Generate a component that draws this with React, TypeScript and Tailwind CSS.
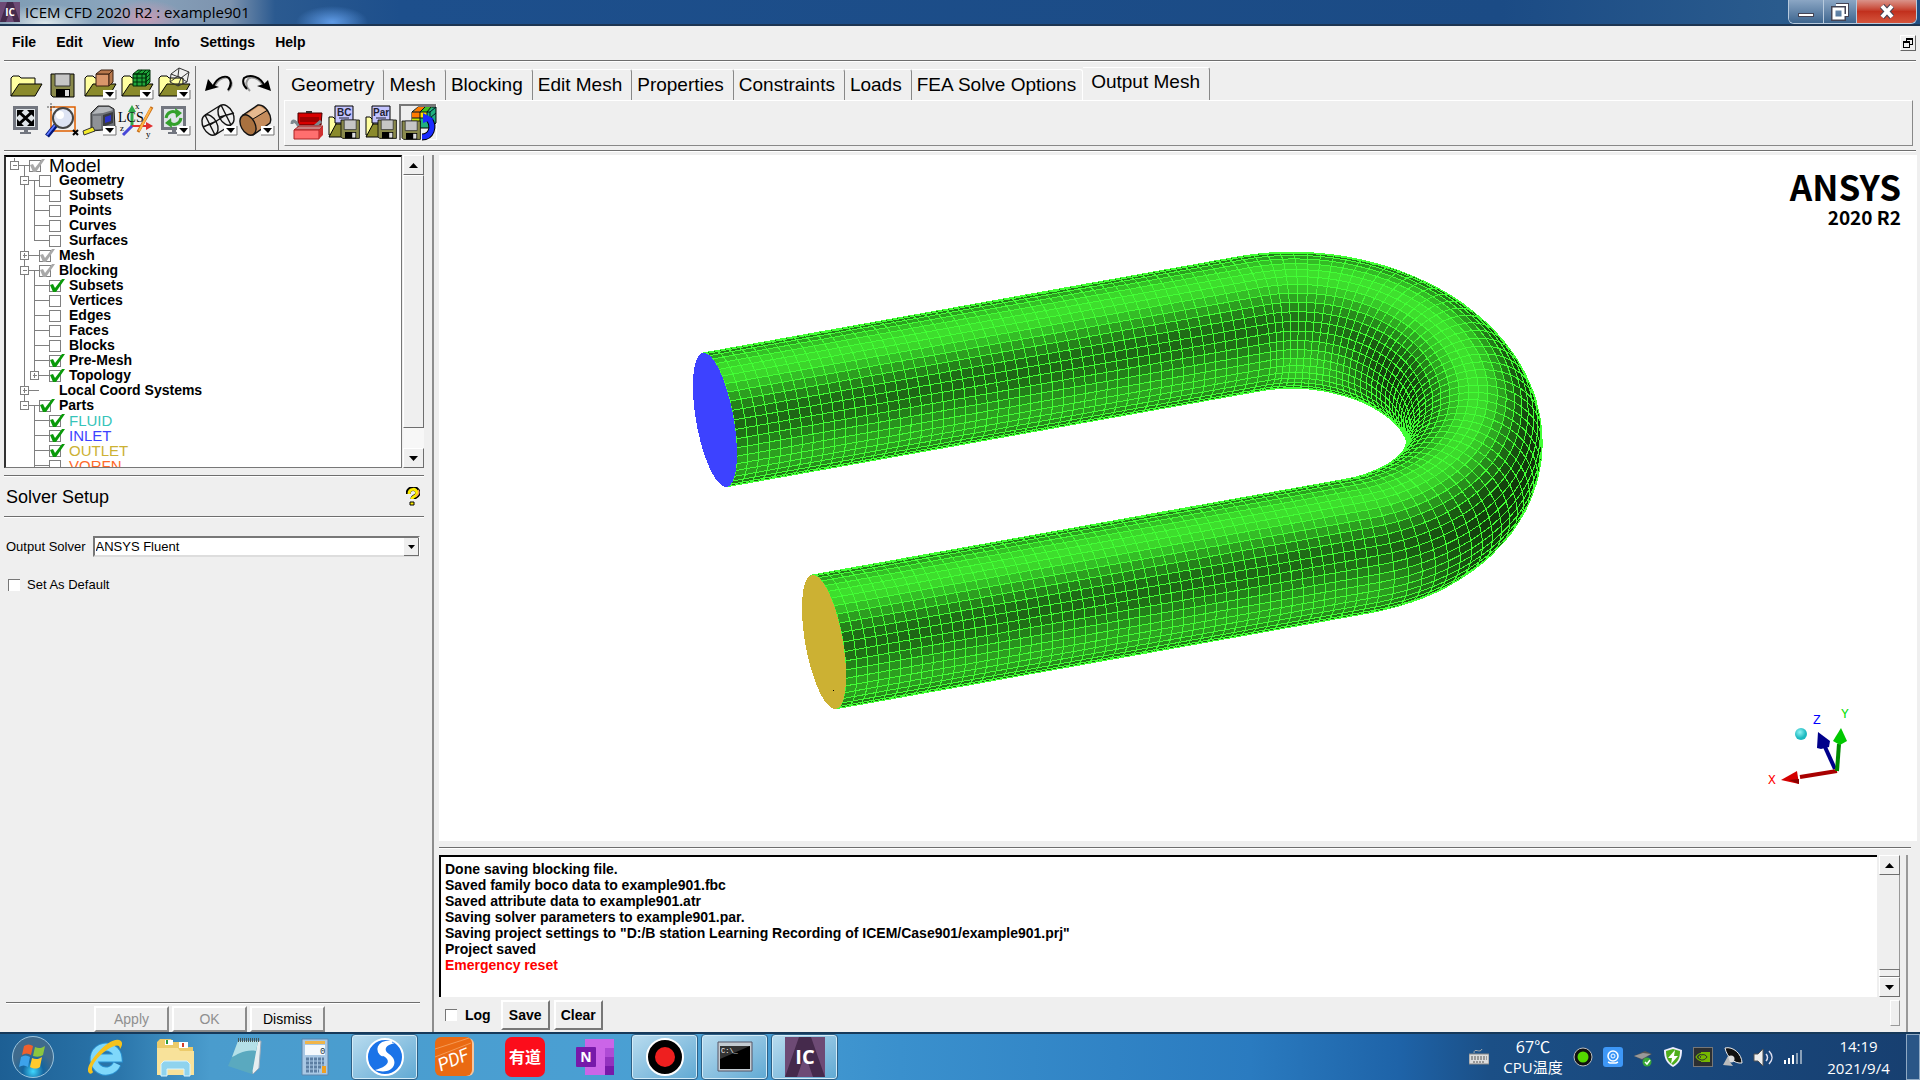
import React from 'react';
import clsx from 'clsx';

type Vec = [number, number, number];

/* ---------- pipe mesh ---------- */

const AXIS: Vec = [0.946, -0.17, -0.275];
const ACROSS: Vec = [0.318, 0.647, 0.694];
const BINORMAL: Vec = [
  AXIS[1] * ACROSS[2] - AXIS[2] * ACROSS[1],
  AXIS[2] * ACROSS[0] - AXIS[0] * ACROSS[2],
  AXIS[0] * ACROSS[1] - AXIS[1] * ACROSS[0],
];
const CENTER: Vec = [1303, 435, 0];
const BEND = 171.6;
const TUBE = 68;
const LEG = 564;
const AROUND = 44;
const LEG_STEPS = 49;
const BEND_STEPS = 48;

const mix = (a: number, u: Vec, b: number, v: Vec): Vec => [
  a * u[0] + b * v[0],
  a * u[1] + b * v[1],
  a * u[2] + b * v[2],
];

const rings: { at: Vec; out: Vec }[] = [];
for (let i = 0; i < LEG_STEPS; i++) {
  const s = LEG * (1 - i / LEG_STEPS);
  rings.push({ at: mix(-BEND, ACROSS, -s, AXIS), out: mix(-1, ACROSS, 0, AXIS) });
}
for (let i = 0; i <= BEND_STEPS; i++) {
  const t = (Math.PI * i) / BEND_STEPS;
  const out = mix(-Math.cos(t), ACROSS, Math.sin(t), AXIS);
  rings.push({ at: mix(BEND, out, 0, out), out });
}
for (let i = 1; i <= LEG_STEPS; i++) {
  const s = (LEG * i) / LEG_STEPS;
  rings.push({ at: mix(BEND, ACROSS, -s, AXIS), out: mix(1, ACROSS, 0, AXIS) });
}

const normalAt = (ring: number, phi: number) => mix(Math.cos(phi), rings[ring].out, Math.sin(phi), BINORMAL);
const pointAt = (ring: number, phi: number): Vec => {
  const p = mix(1, rings[ring].at, TUBE, normalAt(ring, phi));
  return [p[0] + CENTER[0], p[1] + CENTER[1], p[2]];
};
const toPoints = (pts: Vec[]) => pts.map((p) => `${p[0].toFixed(1)},${p[1].toFixed(1)}`).join(' ');

const shade = (n: Vec) => {
  const top = Math.max(0, -0.68 * n[1] + 0.73 * n[2]);
  const bottom = Math.max(0, 0.7 * n[1] + 0.71 * n[2]);
  const v = Math.min(1, 0.22 + 0.74 * top ** 5 + 0.62 * bottom ** 5);
  return `rgb(${Math.round(64 * v + 2)},${Math.round(236 * v)},${Math.round(48 * v)})`;
};

const facets: { points: string; fill: string; depth: number }[] = [];
for (let i = 0; i < rings.length - 1; i++) {
  for (let j = 0; j < AROUND; j++) {
    const a = (2 * Math.PI * j) / AROUND;
    const b = (2 * Math.PI * (j + 1)) / AROUND;
    const n = mix(0.5, normalAt(i, (a + b) / 2), 0.5, normalAt(i + 1, (a + b) / 2));
    if (n[2] <= -0.02) continue;
    const quad = [pointAt(i, a), pointAt(i + 1, a), pointAt(i + 1, b), pointAt(i, b)];
    facets.push({ points: toPoints(quad), fill: shade(n), depth: quad[0][2] + quad[2][2] });
  }
}
facets.sort((p, q) => p.depth - q.depth);

const capPoints = (ring: number) =>
  toPoints(Array.from({ length: 60 }, (_, k) => pointAt(ring, (2 * Math.PI * k) / 60)));

const PipeView = () => (
  <svg viewBox="439 155 1478 686" className="block h-full w-full" role="img" aria-label="Pipe mesh">
    <g stroke="#42ff35" strokeWidth="1" shapeRendering="crispEdges">
      {facets.map((f, i) => (
        <polygon key={i} points={f.points} fill={f.fill} />
      ))}
    </g>
    <polygon points={capPoints(0)} fill="#3d42ff" shapeRendering="crispEdges" />
    <polygon points={capPoints(rings.length - 1)} fill="#ccb133" shapeRendering="crispEdges" />
    <rect x="833" y="690" width="1" height="1" />
    {/* axes */}
    <path d="M1835 769 1825 747" stroke="#00008b" strokeWidth="4" />
    <path d="M1818 732 1830 741 1829 747 1821 749 1817 748Z" fill="#00008b" />
    <path d="M1837 771 1800 777" stroke="#a80000" strokeWidth="4" />
    <path d="M1781 780 1797 771 1799 784Z" fill="#d40000" />
    <path d="M1789 780 1799 779 1799 784Z" fill="#8a0000" />
    <path d="M1837 771 1839 744" stroke="#008a00" strokeWidth="4" />
    <path d="M1841 728 1847 741 1840 745 1833 741Z" fill="#00c800" />
    <defs>
      <radialGradient id="ball" cx="40%" cy="35%">
        <stop offset="0" stopColor="#8ff4f4" />
        <stop offset="1" stopColor="#1cb9c0" />
      </radialGradient>
    </defs>
    <circle cx="1801" cy="734" r="6" fill="url(#ball)" />
    <g fontFamily="Liberation Mono, monospace" fontSize="13">
      <text x="1768" y="784" fill="#ff0000">X</text>
      <text x="1841" y="718" fill="#00e000">Y</text>
      <text x="1813" y="724" fill="#0000ff">Z</text>
    </g>
  </svg>
);

/* ---------- toolbar icons, 37 x 36 each ---------- */

const Drop = () => (
  <g>
    <path d="M22 22h12v9H22z" fill="#fff" />
    <path d="M22 31h13v-9" fill="none" stroke="#777" />
    <path d="M24 24h9l-4 5z" fill="#000" />
  </g>
);

const Folder = () => (
  <g stroke="#000" strokeWidth="1">
    <path d="M4 28V10l2-2h6l2 2h14v6" fill="#ffffa0" />
    <path d="M4 28 12 16h23l-7 12z" fill="#8a8a2c" />
  </g>
);

const Floppy = ({ x = 7, y = 6, s = 1 }: { x?: number; y?: number; s?: number }) => (
  <g transform={`translate(${x} ${y}) scale(${s})`}>
    <path d="M0 0h23v23H2l-2-2z" fill="#8a8a4c" stroke="#000" />
    <path d="M4 0h15v12H4z" fill="#c6c6c6" stroke="#333" />
    <path d="M5 15h14v8H5z" fill="#000" />
    <path d="M14 16h4v6h-4z" fill="#ddd" />
  </g>
);

const Monitor = ({ children }: { children: React.ReactNode }) => (
  <g>
    <path d="M6 2h25v24H6z" fill="#72767f" />
    <path d="M9 5h19v18H9z" fill="#dfe4e8" />
    <path d="M13 28h11v2H13zM17 26h4v3h-4z" fill="#72767f" />
    {children}
  </g>
);

const icons: Record<string, React.ReactNode> = {
  open: <Folder />,
  save: <Floppy />,
  geometry: (
    <>
      <Folder />
      <path d="M15 6v12h13V6z" fill="#d9966a" stroke="#3a2010" />
      <path d="M15 6l5-4h12l-4 4zM28 18l4-4V2l-4 4z" fill="#b8784c" stroke="#3a2010" />
      <Drop />
    </>
  ),
  mesh: (
    <>
      <Folder />
      <path d="M15 6v12h13V6zM15 6l5-4h12l-4 4zM28 18l4-4V2l-4 4z" fill="#1fa53a" stroke="#012d08" />
      <path d="M19 6v12M24 6v12M15 10h13l4-4M15 14h13l4-4M19 6l5-4M24 6l4-4" stroke="#012d08" fill="none" />
      <Drop />
    </>
  ),
  blocking: (
    <>
      <Folder />
      <path
        d="M16 6 24 0l10 4-2 10-9 4-8-4zM16 6l10 4 8-6M26 10l-3 8M24 0l-1 8-8 6M23 8l9 6"
        fill="none"
        stroke="#333"
      />
      <Drop />
    </>
  ),
  undo: (
    <>
      <path d="M12 20C16 9 27 7 29 13c2 4-1 8-3 10" fill="none" stroke="#999" strokeWidth="2" />
      <path d="M11 19C15 8 26 6 28 12c2 4 0 7-2 10" fill="none" stroke="#000" strokeWidth="2" />
      <path d="M3 23 6 11l5 6 6 2z" fill="#000" />
    </>
  ),
  redo: (
    <>
      <path d="M25 20C21 9 10 7 8 13c-2 4 1 8 3 10" fill="none" stroke="#999" strokeWidth="2" />
      <path d="M26 19C22 8 11 6 5 10c-2 4 0 8 3 11" fill="none" stroke="#000" strokeWidth="2" />
      <path d="M32 23 29 12l-4 4-7 2z" fill="#000" />
    </>
  ),
  fit: (
    <Monitor>
      <path d="M12 8l13 12M25 8 12 20" stroke="#000" strokeWidth="3" />
      <path d="M10 6h7l-7 7zM27 6h-7l7 7zM10 22h7l-7-7zM27 22h-7l7-7z" fill="#000" />
    </Monitor>
  ),
  zoom: (
    <>
      <path d="M7 3h24v24H7z" fill="none" stroke="#e06000" strokeWidth="1.5" />
      <path d="M3 3h8M7-1v8" stroke="#555" strokeDasharray="2 1" />
      <path d="M12 21 3 32" stroke="#00157a" strokeWidth="5" />
      <path d="M11 21 3 31" stroke="#5d78ff" strokeWidth="2" />
      <circle cx="19" cy="14" r="10" fill="#dde3f3" stroke="#444" strokeWidth="2" />
      <circle cx="16" cy="11" r="4" fill="#fff" />
      <path d="M29 26l5 5M34 26l-5 5" stroke="#000" strokeWidth="2" />
    </>
  ),
  measure: (
    <>
      <path d="M10 9 17 2h11l5 3 1 18-12 3-12 1z" fill="#6f7277" stroke="#222" />
      <path d="M11 10l7-7h10l4 3-10 3z" fill="#b4b7bb" />
      <path d="M12 12h8v13h-8z" fill="#8f9297" />
      <path d="M22 11l10-3v11l-10 4z" fill="#3a3c40" />
      <path d="M24 13l6-2v6l-6 2z" fill="#2b33c8" />
      <path d="M2 27l10-4 2 4-11 4z" fill="#f3ea2a" stroke="#333" />
      <Drop />
    </>
  ),
  lcs: (
    <>
      <path d="M14 22V4" stroke="#2fa84a" strokeWidth="3" />
      <path d="M10 8l4-7 4 7z" fill="#2fa84a" />
      <path d="M14 22h16" stroke="#e03030" strokeWidth="2" />
      <path d="M28 18l7 4-7 4z" fill="#e03030" />
      <path d="M14 22 5 31" stroke="#4848d8" strokeWidth="3" />
      <path d="M34 3 20 28" stroke="#c76a10" strokeWidth="3" />
      <path d="M33 4 21 27" stroke="#ffb347" strokeWidth="2" />
      <g fontFamily="Liberation Serif, serif" fill="#000">
        <text x="0" y="18" fontSize="14">LCS</text>
        <text x="17" y="5" fontSize="9">x</text>
        <text x="2" y="27" fontSize="9">z</text>
        <text x="28" y="33" fontSize="9">y</text>
      </g>
    </>
  ),
  refresh: (
    <>
      <Monitor>
        <path d="M11 14c1-6 7-8 11-5" fill="none" stroke="#33a02c" strokeWidth="3" />
        <path d="M20 4l7 5-6 5z" fill="#33a02c" />
        <path d="M26 14c-1 6-7 8-11 5" fill="none" stroke="#33a02c" strokeWidth="3" />
        <path d="M17 24l-7-5 6-5z" fill="#33a02c" />
      </Monitor>
      <Drop />
    </>
  ),
  wire: (
    <>
      <g fill="none" stroke="#111" strokeWidth="1.4">
        <ellipse cx="8" cy="21" rx="7" ry="11" transform="rotate(-28 8 21)" />
        <ellipse cx="24" cy="11" rx="7" ry="11" transform="rotate(-28 24 11)" />
        <path d="M3 11 19 1M13 31l16-10M3 11l10 20M1 23l14-6M19 1l10 20M18 13l14-4M8 21l16-10" />
      </g>
      <Drop />
    </>
  ),
  solid: (
    <>
      <path d="M4 11 19 1c7-1 15 11 12 18L14 31z" fill="#c58c5c" stroke="#111" strokeWidth="1.4" />
      <path d="M7 11 20 2l7 4-15 10z" fill="#e6b98f" />
      <path d="M14 15 29 6" stroke="#111" />
      <ellipse cx="9" cy="21" rx="7" ry="11" transform="rotate(-28 9 21)" fill="#a9713f" stroke="#111" strokeWidth="1.4" />
      <Drop />
    </>
  ),
  toolbox: (
    <>
      <path d="M9 9h24l-1 12H9z" fill="#d80000" stroke="#400" />
      <path d="M11 13h19v5H11z" fill="#a00000" />
      <path d="M17 8h6" stroke="#333" strokeWidth="2" />
      <path d="M3 20c0-6 5-2 7 3M24 24l8-7" fill="none" stroke="#7d898f" strokeWidth="3" />
      <path d="M5 26l5-4h24l-4 4z" fill="#c98080" stroke="#a22" />
      <path d="M5 26h25v9H5z" fill="#ff6f6f" stroke="#a22" />
      <path d="M30 26l4-4v9l-4 4z" fill="#d03030" />
    </>
  ),
  bc: (
    <>
      <path d="M3 31V13h4l3 3v15z" fill="#ffffa0" stroke="#000" />
      <path d="M3 33 10 20h12v13z" fill="#8a8a2c" stroke="#000" />
      <path d="M9 2h18v17H9z" fill="#c4c4ff" stroke="#000" />
      <text x="11" y="12" fontSize="10" fontFamily="Liberation Sans, sans-serif" fontWeight="bold" fill="#223">BC</text>
      <path d="M13 14h10" stroke="#223" />
      <Floppy x={15} y={16} s={0.8} />
    </>
  ),
  par: (
    <>
      <path d="M3 31V13h4l3 3v15z" fill="#ffffa0" stroke="#000" />
      <path d="M3 33 10 20h12v13z" fill="#8a8a2c" stroke="#000" />
      <path d="M9 2h18v17H9z" fill="#c4c4ff" stroke="#000" />
      <text x="10" y="12" fontSize="10" fontFamily="Liberation Sans, sans-serif" fontWeight="bold" fill="#223">Par</text>
      <path d="M13 14h10" stroke="#223" />
      <Floppy x={15} y={16} s={0.8} />
    </>
  ),
  write: (
    <>
      <path d="M0 36V1h36" fill="none" stroke="#777" strokeWidth="2" />
      <path d="M12 8l6-5h18v16l-6 5H12z" fill="#20b080" stroke="#000" />
      <path d="M12 8h8v6h-8zM18 3h7l-5 5h-7z" fill="#ff7a00" />
      <path d="M20 8h7v6h-7z" fill="#ffe000" />
      <path d="M25 3h7l-4 5h-8z" fill="#40c020" />
      <path d="M12 14h8v5h-8z" fill="#c8e000" />
      <path d="M12 8h18l6-5M30 8v16M12 14h18l6-5M20 8v12M27 8v8M25 3l-5 5M31 3l-4 5" fill="none" stroke="#012" />
      <path d="M22 33c9 0 13-10 7-18" fill="none" stroke="#000" strokeWidth="7" />
      <path d="M22 33c9 0 13-10 7-18" fill="none" stroke="#1b2cff" strokeWidth="5" />
      <path d="M23 19V9l11 6z" fill="#1b2cff" />
      <Floppy x={2} y={17} s={0.8} />
    </>
  ),
};

const ToolButton = ({ name, pressed }: { name: string; pressed?: boolean }) => (
  <button type="button" aria-label={name} className={clsx('block h-9 w-[37px]', pressed && 'border-r border-b border-white')}>
    <svg viewBox="0 0 37 36" className="block h-9 w-[37px] overflow-visible">{icons[name]}</svg>
  </button>
);

const toolGroups = [
  [
    ['open', 'save', 'geometry', 'mesh', 'blocking'],
    ['fit', 'zoom', 'measure', 'lcs', 'refresh'],
  ],
  [
    ['undo', 'redo'],
    ['wire', 'solid'],
  ],
];

const TABS = ['Geometry', 'Mesh', 'Blocking', 'Edit Mesh', 'Properties', 'Constraints', 'Loads', 'FEA Solve Options'];

/* ---------- model tree ---------- */

type Row = {
  label: string;
  level: number;
  // one letter for each guide column: f full, t upper half, b lower half, - none
  guides: string;
  expander?: '+' | '-';
  check?: 'off' | 'on' | 'partial';
  color?: string;
};

const ROWS: Row[] = [
  { label: 'Model', level: 0, guides: 'tb-', expander: '-', check: 'partial' },
  { label: 'Geometry', level: 1, guides: '-fb', expander: '-', check: 'off' },
  { label: 'Subsets', level: 2, guides: '-ff', check: 'off' },
  { label: 'Points', level: 2, guides: '-ff', check: 'off' },
  { label: 'Curves', level: 2, guides: '-ff', check: 'off' },
  { label: 'Surfaces', level: 2, guides: '-ft', check: 'off' },
  { label: 'Mesh', level: 1, guides: '-f-', expander: '+', check: 'partial' },
  { label: 'Blocking', level: 1, guides: '-fb', expander: '-', check: 'partial' },
  { label: 'Subsets', level: 2, guides: '-ff', check: 'on' },
  { label: 'Vertices', level: 2, guides: '-ff', check: 'off' },
  { label: 'Edges', level: 2, guides: '-ff', check: 'off' },
  { label: 'Faces', level: 2, guides: '-ff', check: 'off' },
  { label: 'Blocks', level: 2, guides: '-ff', check: 'off' },
  { label: 'Pre-Mesh', level: 2, guides: '-ff', check: 'on' },
  { label: 'Topology', level: 2, guides: '-ft', expander: '+', check: 'on' },
  { label: 'Local Coord Systems', level: 1, guides: '-f-', expander: '+' },
  { label: 'Parts', level: 1, guides: '-tb', expander: '-', check: 'on' },
  { label: 'FLUID', level: 2, guides: '--f', check: 'on', color: 'text-[#35c4b9]' },
  { label: 'INLET', level: 2, guides: '--f', check: 'on', color: 'text-[#3d42ff]' },
  { label: 'OUTLET', level: 2, guides: '--f', check: 'on', color: 'text-[#ccb133]' },
  { label: 'VORFN', level: 2, guides: '--f', check: 'off', color: 'text-[#ff6a2a]' },
];

const Guides = ({ row }: { row: Row }) => {
  const width = 23 + row.level * 10;
  const at = 8 + row.level * 10;
  return (
    <svg width={width} height="15" className="shrink-0 overflow-visible" fill="none" stroke="#808080" shapeRendering="crispEdges">
      {row.guides.split('').map((g, i) => {
        const x = 8.5 + i * 10;
        if (g === '-') return null;
        return <path key={i} d={`M${x} ${g === 'b' ? 7 : 0}V${g === 't' ? 8 : 15}`} />;
      })}
      <path d={`M${at} 7.5H${width}`} />
      {row.expander && (
        <g>
          <rect x={at - 3.5} y="3.5" width="8" height="8" fill="#fff" />
          <path d={`M${at - 1} 7.5h4`} />
          {row.expander === '+' && <path d={`M${at + 0.5} 5v5`} />}
        </g>
      )}
    </svg>
  );
};

const TreeRow = ({ row }: { row: Row }) => (
  <li className="flex h-[15px] items-center">
    <Guides row={row} />
    <label className="flex items-center gap-2">
      <span className="relative block size-3">
        {row.check && (
          <input
            type="checkbox"
            defaultChecked={row.check !== 'off'}
            className="block size-3 appearance-none border border-[#808080] bg-white"
          />
        )}
        {row.check && row.check !== 'off' && (
          <svg viewBox="0 0 16 14" className="pointer-events-none absolute -top-px left-0 h-[14px] w-4 overflow-visible">
            <path d="M1 6 4 5l2 4 7-9 3 0L7 13H4z" fill={row.check === 'on' ? '#0a9a0a' : '#a9a9a9'} />
          </svg>
        )}
      </span>
      <span
        className={clsx(
          'whitespace-nowrap leading-[15px]',
          row.level === 0 ? 'text-[19px]' : row.color ? 'text-[15px]' : 'text-[14px] font-bold',
          row.color
        )}
      >
        {row.label}
      </span>
    </label>
  </li>
);

const Arrow = ({ up }: { up?: boolean }) => (
  <button
    type="button"
    aria-label={up ? 'Scroll up' : 'Scroll down'}
    className="flex h-5 w-full shrink-0 items-center justify-center border border-t-white border-l-white border-r-[#6e6e6e] border-b-[#6e6e6e] bg-[#efefef]"
  >
    <svg width="9" height="5">
      <path d={up ? 'M0 5 4.5 0 9 5z' : 'M0 0h9L4.5 5z'} />
    </svg>
  </button>
);

const Rule = ({ className }: { className?: string }) => (
  <div className={clsx('h-0.5 shrink-0 border-t border-b border-t-[#6e6e6e] border-b-white', className)} />
);

const PanelButton = ({ children, ...props }: React.ButtonHTMLAttributes<HTMLButtonElement>) => (
  <button
    type="button"
    className="h-[26px] w-[75px] border-2 border-t-white border-l-white border-r-[#8a8a8a] border-b-[#8a8a8a] text-sm leading-5 disabled:text-[#8f8f8f]"
    {...props}
  >
    {children}
  </button>
);

const SidePanel = () => (
  <aside className="flex w-[434px] shrink-0 flex-col border-r-2 border-[#8d8d8d] pr-2 pl-1">
    <div className="flex h-[313px] shrink-0 gap-px">
      <div className="min-w-0 flex-1 overflow-hidden border-t-2 border-r border-b border-l-2 border-t-black border-r-[#777] border-b-[#777] border-l-[#333] bg-white pt-px">
        <ul>
          {ROWS.map((row, i) => (
            <TreeRow key={i} row={row} />
          ))}
        </ul>
      </div>
      <div className="flex w-[21px] flex-col bg-[#f7f7f7]">
        <Arrow up />
        <div className="h-[253px] border border-t-white border-l-white border-r-[#6e6e6e] border-b-[#6e6e6e] bg-[#efefef]" />
        <div className="flex-1" />
        <Arrow />
      </div>
    </div>
    <Rule className="mt-[7px]" />
    <div className="flex h-[39px] shrink-0 items-center justify-between pr-1 pl-0.5">
      <h2 className="text-lg">Solver Setup</h2>
      <button type="button" aria-label="Help on this panel">
        <svg width="14" height="19" viewBox="0 0 14 19">
          <path d="M2 7c0-7 10-7 10-1 0 4-5 3-5 6" fill="none" stroke="#000" strokeWidth="5" />
          <path d="M3 7c0-6 8-6 8-1 0 4-5 3-5 6" fill="none" stroke="#ffee00" strokeWidth="3" />
          <path d="M12 3c2 3 0 5-2 6" fill="none" stroke="#f0a060" strokeWidth="1.5" />
          <path d="M4 15h4v3H4z" fill="#ffee00" stroke="#000" />
        </svg>
      </button>
    </div>
    <Rule />
    <form className="flex flex-1 flex-col pl-0.5 text-[13px]">
      <div className="flex items-center gap-[7px] pt-[18px]">
        <label htmlFor="solver">Output Solver</label>
        <div className="relative flex-1 pr-1">
          <select
            id="solver"
            className="block h-[21px] w-full appearance-none rounded-none border-2 border-t-[#777] border-r-white border-b-[#ddd] border-l-[#777] bg-white pl-px text-[13px] leading-4"
          >
            <option>ANSYS Fluent</option>
          </select>
          <span className="pointer-events-none absolute top-0.5 right-[5px] flex h-[18px] w-[15px] items-center justify-center border-r border-b border-[#6e6e6e] bg-[#efefef]">
            <svg width="7" height="4">
              <path d="M0 0h7L3.5 4z" />
            </svg>
          </span>
        </div>
      </div>
      <label className="flex items-center gap-[7px] pt-[18px] pl-0.5 leading-5">
        <input type="checkbox" className="block size-3 appearance-none border-t border-l border-[#777] bg-white" />
        Set As Default
      </label>
      <div className="mt-auto">
        <Rule className="mr-1" />
        <div className="flex gap-[3px] pt-0.5 pb-0 pl-[88px]">
          <PanelButton disabled>Apply</PanelButton>
          <PanelButton disabled>OK</PanelButton>
          <PanelButton>Dismiss</PanelButton>
        </div>
      </div>
    </form>
  </aside>
);

const LOG = [
  'Done saving blocking file.',
  'Saved family boco data to example901.fbc',
  'Saved attribute data to example901.atr',
  'Saving solver parameters to example901.par.',
  'Saving project settings to "D:/B station Learning Recording of ICEM/Case901/example901.prj"',
  'Project saved',
];

const Console = () => (
  <section className="flex h-[191px] shrink-0 flex-col pt-1.5 pr-[9px]">
    <Rule className="mb-1.5" />
    <div className="mr-[3px] flex min-h-0 flex-1 border-r-2 border-[#999] pr-1.5">
      <div className="flex flex-1 flex-col">
        <div className="flex flex-1 gap-0.5">
          <div className="flex-1 border-t-2 border-l-2 border-black bg-white py-1 pl-1 text-sm leading-4 font-bold">
            {LOG.map((line) => (
              <p key={line}>{line}</p>
            ))}
            <p className="text-[#ff0000]">Emergency reset</p>
          </div>
          <div className="flex w-[21px] flex-col bg-[#efefef]">
            <Arrow up />
            <div className="flex-1 border-r border-[#999]" />
            <div className="h-2 border border-t-[#777] border-r-[#777] border-b-[#777] border-l-white" />
            <Arrow />
          </div>
        </div>
        <div className="flex h-[35px] items-start gap-1 pt-[3px] text-sm font-bold">
          <label className="flex h-[30px] items-center gap-2 pr-1.5 pl-1.5">
            <input type="checkbox" className="block size-3 appearance-none border-t border-l border-[#777] bg-white" />
            Log
          </label>
          {['Save', 'Clear'].map((t) => (
            <button
              key={t}
              type="button"
              className="h-[30px] w-[49px] border-2 border-t-white border-l-white border-r-[#777] border-b-[#777]"
            >
              {t}
            </button>
          ))}
          <div className="ml-auto h-[26px] w-2.5 border border-t-white border-l-white border-r-[#999] border-b-[#999]" />
        </div>
      </div>
    </div>
  </section>
);

/* ---------- task bar ---------- */

const IcLogo = ({ size }: { size: number }) => (
  <svg width={size} height={size} viewBox="0 0 40 40" className="block">
    <path d="M0 0h40v40H0z" fill="#6d4a75" />
    <path d="M14 0h12l14 40H28L20 17 12 40H0z" fill="#452a4c" />
    <text x="20" y="27" textAnchor="middle" fontSize="20" fontFamily="Open Sans, sans-serif" fontWeight="bold" fill="#fff">
      IC
    </text>
  </svg>
);

const apps: { name: string; open?: boolean; icon: React.ReactNode }[] = [
  {
    name: 'Internet Explorer',
    icon: (
      <svg width="40" height="40" viewBox="0 0 40 40">
        <path d="M32 27a12 12 0 1 1 1-6H11" fill="none" stroke="#2a90d0" strokeWidth="9" />
        <path d="M32 27a12 12 0 1 1 1-6H11" fill="none" stroke="#7fd8fb" strokeWidth="7" />
        <path d="M4 36C-3 30 26-4 36 4c2 2 1 5-1 8 0-13-34 14-27 23-1 2-3 2-4 1z" fill="#f6c21c" />
      </svg>
    ),
  },
  {
    name: 'Explorer',
    icon: (
      <svg width="40" height="40" viewBox="0 0 40 40">
        <path d="M2 5 5 2h11l2 3h14v5h6v28H2z" fill="#eccb6a" />
        <path d="M10 3h8v5h-8zM24 5h9v6h-9z" fill="#fff" />
        <path d="M11 3h2v4h-2z" fill="#2a9a3a" />
        <path d="M27 6h2v4h-2z" fill="#d23c2c" />
        <path d="M2 11h21l2 3h14v24H2z" fill="#f8e29a" />
        <path d="M6 39V27l3-3h23l3 3v12h-6v-7H12v7z" fill="#8fd3ee" stroke="#d9f4ff" />
      </svg>
    ),
  },
  {
    name: 'Notepad',
    icon: (
      <svg width="40" height="40" viewBox="0 0 40 40">
        <path d="M14 4h22l-2 27-6 6z" fill="#e6eef0" stroke="#9ab" />
        <path d="M13 4h20l-6 33-24-8C7 20 10 12 13 4z" fill="#5aa9bf" />
        <path d="M13 4h20l-2 10C20 12 12 18 7 20z" fill="#b4e0e8" />
        <path d="M13 3h22" stroke="#455" strokeWidth="4" strokeDasharray="1 1" />
      </svg>
    ),
  },
  {
    name: 'Calculator',
    icon: (
      <svg width="40" height="40" viewBox="0 0 40 40">
        <path d="M7 2h26v36H7z" fill="#a9c8e4" stroke="#5b86ad" />
        <path d="M10 8h20v10H10z" fill="#f4f9fd" />
        <path d="M10 4h20v3H10z" fill="#f0b54a" />
        <text x="25" y="17" fontSize="9" fontFamily="Liberation Mono, monospace" fill="#234">0</text>
        <path d="M11 22h18M11 26h18M11 30h18M11 34h13" stroke="#5d7fa3" strokeWidth="3" strokeDasharray="3 1" />
        <path d="M27 29h4v7h-4z" fill="#f0a020" />
      </svg>
    ),
  },
  {
    name: 'Sogou',
    open: true,
    icon: (
      <svg width="40" height="40" viewBox="0 0 40 40">
        <circle cx="20" cy="20" r="18" fill="#1a73e8" stroke="#fff" strokeWidth="2" />
        <path d="M30 6C13 2 9 15 18 19c7 3 8 10-8 14 17 6 26-8 14-16-6-4-4-9 6-11z" fill="#fff" />
        <path d="M27 5C12 4 11 15 18 18" stroke="#fff" strokeWidth="3" fill="none" />
      </svg>
    ),
  },
  {
    name: 'PDF',
    icon: (
      <svg width="40" height="40" viewBox="0 0 40 40">
        <rect x="3" y="1" width="36" height="38" rx="6" fill="#f3c6a0" />
        <rect x="0" y="0" width="37" height="39" rx="6" fill="#ea6a13" />
        <path d="M0 12 34 1M0 20 36 6" stroke="#f59a55" />
        <text x="2" y="29" fontSize="18" fontStyle="italic" fontFamily="Roboto, sans-serif" fill="#fff" transform="rotate(-22 18 22)">
          PDF
        </text>
      </svg>
    ),
  },
  {
    name: 'Youdao',
    icon: (
      <svg width="40" height="40" viewBox="0 0 40 40">
        <rect width="40" height="40" rx="7" fill="#fc0d1b" />
        <text x="20" y="26" textAnchor="middle" fontSize="16" fontWeight="bold" fontFamily="Noto Sans CJK SC, sans-serif" fill="#fff">
          有道
        </text>
      </svg>
    ),
  },
  {
    name: 'OneNote',
    icon: (
      <svg width="40" height="40" viewBox="0 0 40 40">
        <path d="M10 2h29v36H10z" fill="#cb65e8" />
        <path d="M30 11h9v9h-9z" fill="#ae4bd5" />
        <path d="M30 20h9v9h-9z" fill="#9332bf" />
        <path d="M30 29h9v9h-9z" fill="#7719aa" />
        <rect x="1" y="10" width="20" height="20" rx="1" fill="#7719aa" />
        <text x="11" y="25" textAnchor="middle" fontSize="14" fontWeight="bold" fontFamily="Open Sans, sans-serif" fill="#fff">
          N
        </text>
      </svg>
    ),
  },
  {
    name: 'Recorder',
    open: true,
    icon: (
      <svg width="40" height="40" viewBox="0 0 40 40">
        <circle cx="20" cy="20" r="18" fill="#000" stroke="#fff" strokeWidth="2" />
        <circle cx="20" cy="20" r="10" fill="#ee1f1f" />
      </svg>
    ),
  },
  {
    name: 'Command Prompt',
    open: true,
    icon: (
      <svg width="40" height="40" viewBox="0 0 40 40">
        <path d="M3 5h34v29H3z" fill="#c4ccd2" stroke="#556" />
        <path d="M5 9h30v23H5z" fill="#000" />
        <path d="M5 9h30L5 22z" fill="#333" />
        <text x="6" y="16" fontSize="7" fontFamily="Liberation Mono, monospace" fill="#fff">C:\_</text>
      </svg>
    ),
  },
  { name: 'ICEM CFD', open: true, icon: <IcLogo size={40} /> },
];

const trayIcons: React.ReactNode[] = [
  <g>
    <circle cx="10" cy="10" r="9" fill="#111" stroke="#bbb" />
    <circle cx="10" cy="10" r="5.5" fill="#55d800" />
  </g>,
  <g>
    <rect width="20" height="20" rx="3" fill="#3d97f7" />
    <circle cx="10" cy="9" r="5" fill="none" stroke="#fff" strokeWidth="1.5" />
    <circle cx="10" cy="9" r="2" fill="none" stroke="#fff" />
    <path d="M5 15l2 1h6l2-1" fill="none" stroke="#fff" strokeWidth="1.5" />
  </g>,
  <g>
    <path d="M1 9 12 4l7 3-10 6z" fill="#555" />
    <path d="M1 9l9-3 8 1-9 5z" fill="#999" />
    <circle cx="14" cy="15" r="4.5" fill="#38a838" />
    <path d="M12 15l2 2 3-4" fill="none" stroke="#fff" strokeWidth="1.5" />
  </g>,
  <g>
    <path d="M10 0l9 3c0 8-2 13-9 17C3 16 1 11 1 3z" fill="#eef" />
    <path d="M10 2l7 2c0 7-2 11-7 14-5-3-7-7-7-14z" fill="#4fae1c" />
    <path d="M12 3 5 11h4l-1 6 7-8h-4z" fill="#fff" />
  </g>,
  <g>
    <rect x="0.5" y="0.5" width="19" height="19" fill="#2c2f31" stroke="#777" />
    <path d="M8 5h9v10H8z" fill="#76b900" />
    <path d="M3 10c3-5 9-5 12 0-3 5-9 5-12 0zM6 10c2-3 5-3 6 0-2 3-5 2-6 0z" fill="none" stroke="#76b900" strokeWidth="1.2" />
    <path d="M8 8c3-1 5 0 6 2-2 3-4 3-6 3" fill="none" stroke="#2c2f31" />
  </g>,
  <g>
    <path d="M2 1c8-2 17 6 17 15-8 1-15-6-17-15z" fill="#111" stroke="#eee" />
    <circle cx="8" cy="12" r="3.5" fill="#ddd" />
    <path d="M0 18l5-9 2 6 3 4z" fill="#bbb" />
  </g>,
  <g>
    <path d="M1 7h4l5-5v17l-5-5H1z" fill="#eee" stroke="#555" />
    <path d="M13 7c2 2 2 5 0 7M16 4c4 4 4 9 0 13" fill="none" stroke="#dde" strokeWidth="1.5" />
  </g>,
  <g>
    <path d="M1 17v-4h2v4zM5 17v-6h2v6zM9 17V8h2v9z" fill="#fff" />
    <path d="M13 17V6h2v11zM17 17V3h2v14z" fill="#8aa0b8" />
  </g>,
];

const TaskBar = () => (
  <footer className="flex h-12 shrink-0 items-stretch border-t-2 border-t-[#16395a] bg-[linear-gradient(90deg,#1d5f94_0px,#2b76ab_120px,#4a9ccd_210px,#4aa0d4_700px,#3a90cd_900px,#2a7bc0_1250px,#1e63a8_1400px,#1b4f86_1490px,#173f70_1920px)] font-['Open_Sans','Noto_Sans_CJK_SC',sans-serif] text-white">
    <button type="button" aria-label="Start" className="flex w-[66px] items-center justify-center">
      <svg width="44" height="44" viewBox="0 0 44 44">
        <defs>
          <radialGradient id="orb" cx="50%" cy="85%">
            <stop offset="0" stopColor="#3fd8ff" />
            <stop offset="0.5" stopColor="#14659f" />
            <stop offset="1" stopColor="#3f6a8c" />
          </radialGradient>
        </defs>
        <circle cx="22" cy="22" r="20.5" fill="url(#orb)" stroke="#9bc4dd" />
        <path d="M13 11c3-2 6-2 9 0l-2 9c-3-2-6-2-9 0z" fill="#f0602c" />
        <path d="M24 12c4 2 7 1 10-1l-2 9c-3 2-6 2-10 1z" fill="#8cc63f" />
        <path d="M10 22c3-2 6-2 9 0l-2 10c-3-2-6-2-9 0z" fill="#3da2ea" />
        <path d="M21 23c4 2 7 1 10-1l-2 10c-3 2-6 2-10 0z" fill="#ffca2c" />
      </svg>
    </button>
    <nav className="flex pl-1" aria-label="Programs">
      {apps.map((app) => (
        <div key={app.name} className="w-[70px] pr-0.5 pl-px">
          <button
            type="button"
            aria-label={app.name}
            className={clsx(
              'flex h-full w-full items-center justify-center',
              app.open && 'rounded-sm border border-[#2c5f85] bg-gradient-to-br from-[#b9dcef] to-[#5fa9d3] shadow-[inset_0_0_0_1px_#d4ecf8]'
            )}
          >
            {app.icon}
          </button>
        </div>
      ))}
    </nav>
    <div className="ml-auto flex items-center">
      <svg width="20" height="18" viewBox="0 0 20 18" className="mr-3.5">
        <path d="M0 6h20v10H0z" fill="#ddd" stroke="#888" />
        <path d="M2 9h16M2 11h16M4 14h12" stroke="#555" strokeDasharray="2 1" />
        <path d="M5 5c0-6 6 1 8-4" fill="none" stroke="#aaa" />
      </svg>
      <div className="w-[60px] text-center text-base leading-5 whitespace-nowrap">
        <p>67℃</p>
        <p className="text-[15px]">CPU温度</p>
      </div>
      <div className="flex gap-2.5 pl-2.5">
        {trayIcons.map((icon, i) => (
          <svg key={i} width="20" height="20" viewBox="0 0 20 20">
            {icon}
          </svg>
        ))}
      </div>
      <div className="w-[103px] pl-2 text-center text-[15px] leading-[22px]">
        <p>14:19</p>
        <p>2021/9/4</p>
      </div>
      <button type="button" aria-label="Show desktop" className="h-full w-3.5 border border-[#8fa9c4] bg-[#2a5687]" />
    </div>
  </footer>
);

/* ---------- window ---------- */

const TitleBar = () => (
  <header className="flex h-[26px] shrink-0 items-start justify-between border-b-2 border-[#1d3552] bg-[radial-gradient(ellipse_36px_16px_at_332px_22px,#5f9be6,transparent),radial-gradient(ellipse_40px_18px_at_145px_18px,#c79bb4,transparent),radial-gradient(ellipse_50px_20px_at_45px_24px,#dfe8ea,transparent),linear-gradient(90deg,#7f9cb4_0px,#8aa5bd_120px,#7d93ae_230px,#2b5a90_275px,#1d4f8c_400px,#1b4b85_1500px,#2a5b8d_1780px,#1f4f84_100%)]">
    <div className="flex items-center gap-[5px]">
      <IcLogo size={20} />
      <h1 className="font-['Open_Sans',sans-serif] text-[15px] leading-6">ICEM CFD 2020 R2 : example901</h1>
    </div>
    <div className="mr-[3px] flex h-6 overflow-hidden rounded-b-md border border-t-0 border-[#b8cadd]">
      <button type="button" aria-label="Minimize" className="flex w-[35px] items-end justify-center border-r border-[#b8cadd] bg-gradient-to-b from-[#8ba6c4] to-[#3e668f] pb-1.5">
        <span className="block h-1 w-4 border border-[#445] bg-white" />
      </button>
      <button type="button" aria-label="Restore" className="flex w-[33px] items-center justify-center border-r border-[#b8cadd] bg-gradient-to-b from-[#8ba6c4] to-[#3e668f]">
        <svg width="18" height="18" viewBox="0 0 18 18" fill="none">
          <path d="M5 2h11v10h-3M2 5h11v11H2z" stroke="#445" strokeWidth="4" />
          <path d="M5 2h11v10h-3" stroke="#fff" strokeWidth="2" />
          <path d="M3 6h9v9H3z" stroke="#fff" strokeWidth="3" />
        </svg>
      </button>
      <button type="button" aria-label="Close" className="flex w-[59px] items-center justify-center bg-gradient-to-b from-[#d9938a] via-[#c2301d] to-[#d5543c]">
        <svg width="16" height="15" viewBox="0 0 16 15">
          <path d="M3 2l10 11M13 2 3 13" stroke="#445" strokeWidth="6" />
          <path d="M3 2l10 11M13 2 3 13" stroke="#fff" strokeWidth="4" />
        </svg>
      </button>
    </div>
  </header>
);

const MenuBar = () => (
  <nav className="flex h-[34px] shrink-0 items-center justify-between pr-1 pl-3">
    <div className="flex gap-5 pb-0.5 text-sm font-bold">
      {['File', 'Edit', 'View', 'Info', 'Settings', 'Help'].map((m) => (
        <button key={m} type="button">
          {m}
        </button>
      ))}
    </div>
    <button
      type="button"
      aria-label="Restore view"
      className="flex size-4 items-center justify-center border border-t-white border-l-white border-r-[#666] border-b-[#666]"
    >
      <svg width="11" height="11" viewBox="0 0 11 11" className="shrink-0" fill="none" stroke="#000" shapeRendering="crispEdges">
        <path d="M3.5 4V1.5h6v5H7M.5 4.500h6v5h-6zM3 .5h7M0 3.500h7" />
      </svg>
    </button>
  </nav>
);

const ToolBar = () => (
  <div className="mx-1 flex shrink-0 pt-1">
    {toolGroups.map((group, g) => (
      <div key={g} className={clsx('mr-[5px] flex flex-col border-r border-[#777] pt-0.5', g === 0 ? 'px-[3px]' : 'pr-0.5 pl-px')}>
        {group.map((line, i) => (
          <div key={i} className="flex">
            {line.map((name) => (
              <ToolButton key={name} name={name} />
            ))}
          </div>
        ))}
      </div>
    ))}
    <div className="mr-[3px] flex-1 pb-1">
      <div role="tablist" className="flex h-[34px] items-end pl-0.5 text-[19px] leading-7">
        {TABS.map((t) => (
          <button
            key={t}
            type="button"
            role="tab"
            className="h-[31px] rounded-tr-[3px] border-t border-r border-t-white border-r-[#888] pr-[9px] pl-[5px] whitespace-nowrap nth-8:border-r-white nth-8:pr-1.5"
          >
            {t}
          </button>
        ))}
        <button
          type="button"
          role="tab"
          aria-selected
          className="h-[33px] rounded-tr-[3px] border-t border-r border-t-white border-r-[#888] pr-[9px] pb-1 pl-2 whitespace-nowrap"
        >
          Output Mesh
        </button>
      </div>
      <div className="flex h-[46px] border border-t-white border-r-[#888] border-b-[#888] border-l-white pt-[3px] pl-1">
        {['toolbox', 'bc', 'par', 'write'].map((name) => (
          <ToolButton key={name} name={name} pressed={name === 'write'} />
        ))}
      </div>
    </div>
  </div>
);

export default function App() {
  return (
    <div className="flex h-screen flex-col overflow-hidden bg-[#efefef] font-['Liberation_Sans',Arial,sans-serif] text-black">
      <TitleBar />
      <MenuBar />
      <Rule className="mx-1" />
      <ToolBar />
      <Rule className="mx-1 mb-[3px]" />
      <div className="flex min-h-0 flex-1">
        <SidePanel />
        <main className="flex min-w-0 flex-1 flex-col pl-[5px]">
          <div className="relative mr-[3px] min-h-0 flex-1 bg-white">
            <PipeView />
            <div className="absolute top-2.5 right-4 text-right font-['Noto_Sans_CJK_SC',sans-serif] font-bold">
              <p className="text-[35px] leading-[42px]">ANSYS</p>
              <p className="text-[19px] leading-5">2020 R2</p>
            </div>
          </div>
          <Console />
        </main>
      </div>
      <TaskBar />
    </div>
  );
}
